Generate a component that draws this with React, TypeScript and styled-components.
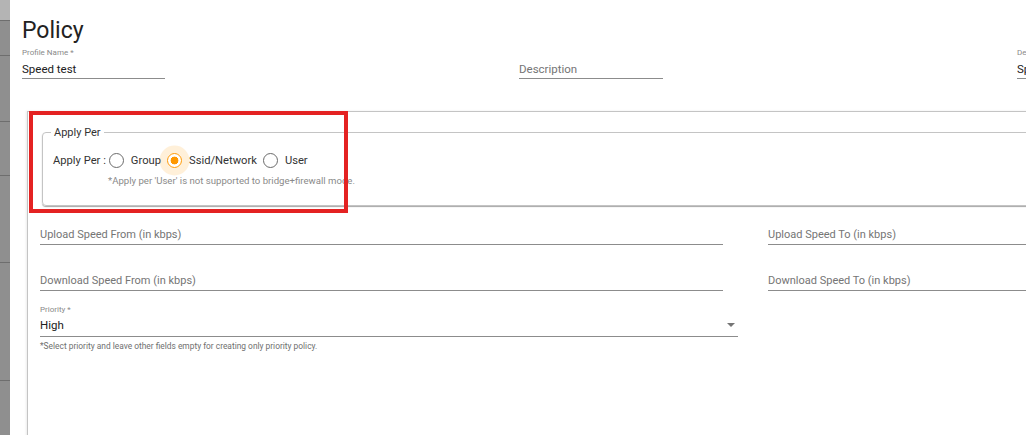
import React from "react";
import styled, { createGlobalStyle } from "styled-components";

const Global = createGlobalStyle`
  html, body {
    margin: 0;
    padding: 0;
    width: 1026px;
    height: 435px;
    overflow: hidden;
    background: #fff;
  }
  body {
    font-family: Roboto, "Noto Sans", Arial, sans-serif;
    color: #212121;
  }
  * { box-sizing: border-box; }
`;

const Screen = styled.div`
  display: flex;
  width: 1026px;
  height: 435px;
  overflow: hidden;
`;

const Backdrop = styled.div`
  flex: none;
  width: 10px;
  height: 100%;
  background:
    linear-gradient(#6e6e6e, #6e6e6e) 0 20px / 100% 1px no-repeat,
    linear-gradient(#6e6e6e, #6e6e6e) 0 55px / 100% 1px no-repeat,
    linear-gradient(#6e6e6e, #6e6e6e) 0 121px / 100% 1px no-repeat,
    linear-gradient(#6e6e6e, #6e6e6e) 0 175px / 100% 1px no-repeat,
    linear-gradient(#6e6e6e, #6e6e6e) 0 262px / 100% 1px no-repeat,
    linear-gradient(#6e6e6e, #6e6e6e) 0 380px / 100% 1px no-repeat,
    linear-gradient(#b4b4b4, #b4b4b4) 0 0 / 100% 20px no-repeat,
    #8f8f8f;
`;

const Dialog = styled.div`
  flex: 1;
  min-width: 0;
  height: 100%;
  overflow: hidden;
  background: #fff;
  padding: 17px 0 0 12px;
`;

const Title = styled.h2`
  margin: 0;
  font-size: 23px;
  line-height: 28px;
  font-weight: 400;
  color: #222;
`;

const TopRow = styled.div`
  display: flex;
  gap: 354px;
  margin-top: 3px;
  white-space: nowrap;
`;

const Field = styled.div<{ $width: number }>`
  flex: none;
  width: ${(p) => p.$width}px;
`;

const SmallLabel = styled.div`
  height: 10px;
  font-size: 8px;
  line-height: 10px;
  color: #8a8a8a;
`;

const TopInput = styled.div<{ $placeholder?: boolean }>`
  margin-top: 2px;
  height: 19px;
  font-size: 11.5px;
  line-height: 18px;
  color: ${(p) => (p.$placeholder ? "#757575" : "#212121")};
  border-bottom: 1px solid #8c8c8c;
  overflow: hidden;
`;

const Paper = styled.div`
  position: relative;
  margin: 32px 0 0 5px;
  width: 1100px;
  height: 400px;
  background: #fff;
  border-top: 1px solid #c4c4c4;
  border-left: 1px solid #c4c4c4;
  box-shadow: -1px 0 2px rgba(0, 0, 0, 0.08);
  padding: 0 0 0 12px;
`;

const Annotation = styled.div`
  position: absolute;
  left: 1px;
  top: -1px;
  width: 319px;
  height: 102px;
  border: 4px solid #e42222;
  pointer-events: none;
`;

const Fieldset = styled.fieldset`
  margin: 14px 0 0 2px;
  padding: 0 0 18px 10px;
  border: 1px solid #c4c4c4;
  border-radius: 4px;
  box-shadow: 0 1px 1px rgba(0, 0, 0, 0.35);
`;

const Legend = styled.legend`
  margin-left: -2px;
  padding: 0 3px;
  font-size: 11px;
  line-height: 13px;
  color: #333;
`;

const RadioRow = styled.div`
  display: flex;
  align-items: center;
  height: 30px;
  margin-top: 6px;
  gap: 6px;
  font-size: 11.2px;
  color: #333;
`;

const RowCaption = styled.span`
  margin-right: -3px;
`;

const Option = styled.label`
  display: flex;
  align-items: center;
  gap: 7px;
`;

const Radio = styled.span<{ $checked?: boolean }>`
  flex: none;
  width: 15px;
  height: 15px;
  border-radius: 50%;
  border: ${(p) => (p.$checked ? "1.5px solid #ff9800" : "1px solid #6b6b6b")};
  background: ${(p) =>
    p.$checked
      ? "radial-gradient(circle, #ff9800 0 3.6px, transparent 4.2px)"
      : "transparent"};
  box-shadow: ${(p) =>
    p.$checked ? "0 0 0 7.5px rgba(255, 152, 0, 0.15)" : "none"};
`;

const Note = styled.div`
  margin-left: 55px;
  font-size: 9.6px;
  line-height: 12px;
  color: #8a8a8a;
  white-space: nowrap;
`;

const SpeedGrid = styled.div`
  display: grid;
  grid-template-columns: 683px 683px;
  column-gap: 45px;
  row-gap: 25px;
  margin-top: 18px;
`;

const SpeedInput = styled.div`
  height: 21px;
  font-size: 11px;
  line-height: 22px;
  color: #757575;
  border-bottom: 1px solid #8c8c8c;
  white-space: nowrap;
`;

const SelectField = styled.div`
  width: 698px;
  margin-top: 14px;
`;

const SelectBox = styled.div`
  display: flex;
  align-items: center;
  justify-content: space-between;
  margin-top: 1px;
  height: 21px;
  padding: 0 3px 2px 0;
  font-size: 11.5px;
  line-height: 18px;
  color: #212121;
  border-bottom: 1px solid #8c8c8c;
`;

const Helper = styled.div`
  margin-top: 4px;
  font-size: 8.4px;
  line-height: 10px;
  color: #6f6f6f;
  white-space: nowrap;
`;

export default function App() {
  return (
    <>
      <Global />
      <Screen>
        <Backdrop />
        <Dialog>
          <Title>Policy</Title>
          <TopRow>
            <Field $width={143}>
              <SmallLabel>Profile Name *</SmallLabel>
              <TopInput>Speed test</TopInput>
            </Field>
            <Field $width={144}>
              <SmallLabel />
              <TopInput $placeholder>Description</TopInput>
            </Field>
            <Field $width={143}>
              <SmallLabel>Default Profile</SmallLabel>
              <TopInput>Speed test</TopInput>
            </Field>
          </TopRow>
          <Paper>
            <Fieldset>
              <Legend>Apply Per</Legend>
              <RadioRow>
                <RowCaption>Apply Per :</RowCaption>
                <Option>
                  <Radio />
                  Group
                </Option>
                <Option>
                  <Radio $checked />
                  Ssid/Network
                </Option>
                <Option>
                  <Radio />
                  User
                </Option>
              </RadioRow>
              <Note>*Apply per 'User' is not supported to bridge+firewall mode.</Note>
            </Fieldset>
            <SpeedGrid>
              <SpeedInput>Upload Speed From (in kbps)</SpeedInput>
              <SpeedInput>Upload Speed To (in kbps)</SpeedInput>
              <SpeedInput>Download Speed From (in kbps)</SpeedInput>
              <SpeedInput>Download Speed To (in kbps)</SpeedInput>
            </SpeedGrid>
            <SelectField>
              <SmallLabel>Priority *</SmallLabel>
              <SelectBox>
                <span>High</span>
                <svg width="8" height="4" viewBox="0 0 8 4">
                  <path d="M0 0 L8 0 L4 4 Z" fill="#757575" />
                </svg>
              </SelectBox>
              <Helper>
                *Select priority and leave other fields empty for creating only priority policy.
              </Helper>
            </SelectField>
            <Annotation />
          </Paper>
        </Dialog>
      </Screen>
    </>
  );
}
